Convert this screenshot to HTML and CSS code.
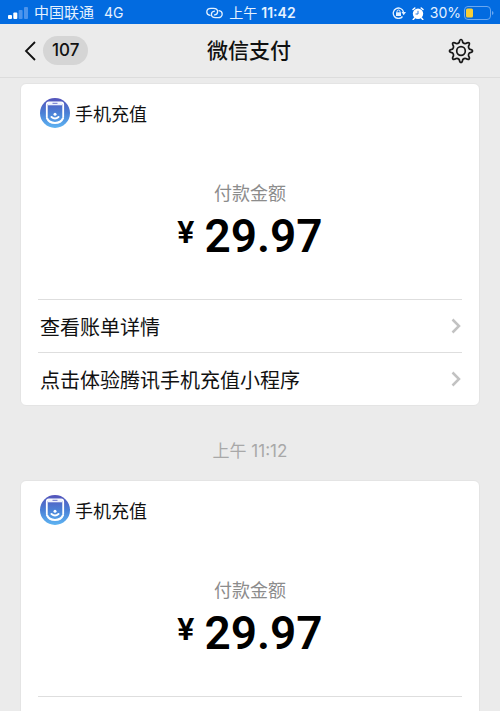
FILE: index.html
```html
<!DOCTYPE html>
<html lang="zh-CN">
<head>
<meta charset="utf-8">
<meta name="viewport" content="width=device-width, initial-scale=1">
<title>微信支付</title>
<link rel="stylesheet" href="styles.css">
</head>
<body>
<svg class="defs" aria-hidden="true">
  <defs>
    <linearGradient id="sky" x1="0" y1="0" x2="0" y2="1">
      <stop offset="0" stop-color="#5453ba"/>
      <stop offset="0.5" stop-color="#4a80d6"/>
      <stop offset="1" stop-color="#5eb4f2"/>
    </linearGradient>
    <symbol id="recharge" viewBox="0 0 30 30">
      <circle cx="15" cy="15" r="15" fill="url(#sky)"/>
      <path d="M6.800 19V6.500Q6.800 4.500 8.800 4.500H21.200Q23.200 4.500 23.200 6.500V19" fill="none" stroke="#fff" stroke-width="1.800"/>
      <path d="M8 4.500H22V7.300H8Z" fill="#eef2fd"/>
      <path d="M12.500 5.300H17.500" stroke="#6a72cc" stroke-width="1"/>
      <circle cx="15" cy="16.200" r="1.500" fill="#fff"/>
      <path d="M11.500 19Q15 22 18.500 19M6.900 20Q9 25 15 25T23.100 20" fill="none" stroke="#fff" stroke-width="2" stroke-linecap="round"/>
    </symbol>
    <symbol id="chevron" viewBox="0 0 10 16">
      <path d="M1.500 1.500L8 8L1.500 14.500" fill="none" stroke="#c2c2c2" stroke-width="2.500"/>
    </symbol>
  </defs>
</svg>
<div class="screen">
  <div class="status">
    <div class="status-side">
      <svg width="20" height="12" viewBox="0 0 20 12" aria-hidden="true">
        <rect x="0" y="8" width="4" height="4" rx="1" fill="#fff"/>
        <rect x="5.300" y="5.500" width="4" height="6.500" rx="1" fill="#fff"/>
        <rect x="10.600" y="3" width="4" height="9" rx="1" fill="#4c94ec"/>
        <rect x="16" y="0" width="4" height="12" rx="1" fill="#4c94ec"/>
      </svg>
      <span class="carrier">中国联通</span>
      <span class="network">4G</span>
    </div>
    <div class="status-time">
      <svg width="17" height="12" viewBox="0 0 17 12" fill="none" stroke="#e4f1ff" stroke-width="1.300" stroke-linecap="round" aria-hidden="true">
        <path d="M4 8.300C2 8 0.800 6.600 0.800 5C0.800 2.800 2.600 1.300 5 1.300H7.500C10 1.300 11.600 2.800 11.600 4.700C11.600 6.400 10.400 7.700 8.500 7.900"/>
        <path d="M13 3.700C15 4 16.200 5.400 16.200 7C16.200 9.200 14.400 10.700 12 10.700H9.500C7 10.700 5.400 9.200 5.400 7.300C5.400 5.600 6.600 4.300 8.500 4.100"/>
      </svg>
      <span>上午 <b>11:42</b></span>
    </div>
    <div class="status-side status-end">
      <svg width="14" height="12" viewBox="0 0 14 12" fill="none" stroke="#e4f1ff" stroke-width="1.300" aria-hidden="true">
        <path d="M10.500 9.500A5.200 5.200 0 1 1 11.500 5"/>
        <path d="M9.500 5H14L11.700 8.200Z" fill="#e4f1ff" stroke="none"/>
        <rect x="4" y="5.300" width="5" height="3.700" fill="#e4f1ff" stroke="none"/>
        <path d="M5 5.500V4.500A1.500 1.500 0 0 1 8 4.500V5.500" stroke-width="1"/>
      </svg>
      <svg class="alarm" width="12" height="13" viewBox="0 0 12 13" aria-hidden="true">
        <circle cx="6" cy="6.800" r="5.200" fill="#fff"/>
        <path d="M1 2.500L2.800 1M11 2.500L9.200 1M2.500 11L1.200 12.500M9.500 11L10.800 12.500" stroke="#fff" stroke-width="1.500" stroke-linecap="round"/>
        <path d="M6 3.800V7H3.500" fill="none" stroke="#2c7cdf" stroke-width="1"/>
      </svg>
      <span class="percent">30%</span>
      <svg class="battery" width="30" height="14" viewBox="0 0 30 14" aria-hidden="true">
        <rect x="0.500" y="0.500" width="26" height="13" rx="3.500" fill="none" stroke="#6ba8f0"/>
        <rect x="2" y="2.500" width="7" height="9" rx="1.500" fill="#f7ce36"/>
        <path d="M28 5V9Q29.500 8.500 29.500 7T28 5Z" fill="#6ba8f0"/>
      </svg>
    </div>
  </div>

  <header class="nav">
    <button class="back" type="button" aria-label="返回">
      <svg width="12" height="20" viewBox="0 0 12 20" aria-hidden="true">
        <path d="M11 1L2 10L11 19" fill="none" stroke="#111" stroke-width="1.800"/>
      </svg>
      <span class="unread">107</span>
    </button>
    <h1>微信支付</h1>
    <button class="settings" type="button" aria-label="设置">
      <svg width="26" height="26" viewBox="0 0 26 26" fill="none" stroke="#181818" stroke-width="1.700" stroke-linejoin="round" aria-hidden="true">
        <path d="M11.200 4.500Q11.700 1.500 13 1.500T14.800 4.500Q16.300 5.800 17.800 5.500Q20.200 4 21.100 4.900T20.500 8.200Q20.200 9.700 21.500 11.200Q24.500 11.700 24.500 13T21.500 14.800Q20.200 16.300 20.500 17.800Q22 20.200 21.100 21.100T17.800 20.500Q16.300 20.200 14.800 21.500Q14.300 24.500 13 24.500T11.200 21.500Q9.700 20.200 8.200 20.500Q5.800 22 4.900 21.100T5.500 17.800Q5.800 16.300 4.500 14.800Q1.500 14.300 1.500 13T4.500 11.200Q5.800 9.700 5.500 8.200Q4 5.800 4.900 4.900T8.200 5.500Q9.700 5.800 11.200 4.500Z"/>
        <circle cx="13" cy="13" r="4.300"/>
      </svg>
    </button>
  </header>

  <main class="chat">
    <article class="card">
      <div class="sender">
        <svg width="30" height="30" aria-hidden="true"><use href="#recharge"/></svg>
        <h2>手机充值</h2>
      </div>
      <div class="payment">
        <p class="label">付款金额</p>
        <p class="amount"><span class="yen">¥</span><span>29.97</span></p>
      </div>
      <a class="row" href="#bill">查看账单详情<svg width="10" height="16" aria-hidden="true"><use href="#chevron"/></svg></a>
      <a class="row" href="#app">点击体验腾讯手机充值小程序<svg width="10" height="16" aria-hidden="true"><use href="#chevron"/></svg></a>
    </article>

    <time class="stamp" datetime="11:12">上午 11:12</time>

    <article class="card">
      <div class="sender">
        <svg width="30" height="30" aria-hidden="true"><use href="#recharge"/></svg>
        <h2>手机充值</h2>
      </div>
      <div class="payment">
        <p class="label">付款金额</p>
        <p class="amount"><span class="yen">¥</span><span>29.97</span></p>
      </div>
      <div class="row"></div>
    </article>
  </main>
</div>
</body>
</html>
```
FILE: styles.css
```css
* {
  box-sizing: border-box;
}

body {
  margin: 0;
  background: #ebebeb;
  color: #111;
  font-family: Inter, "Noto Sans CJK SC", sans-serif;
}

h1, h2, p {
  margin: 0;
  font-weight: 400;
}

button {
  padding: 0;
  border: 0;
  background: none;
  color: inherit;
  font: inherit;
}

svg {
  display: block;
  flex: none;
}

.defs {
  position: absolute;
  width: 0;
  height: 0;
}

.screen {
  display: flex;
  flex-direction: column;
  height: 100vh;
  overflow: hidden;
}

.status {
  display: grid;
  grid-template-columns: 1fr auto 1fr;
  align-items: center;
  flex: none;
  height: 24px;
  padding: 2px 6px 0 8px;
  background: #026be0;
  color: #e4f1ff;
  font-size: 14px;
  line-height: 22px;
}

.status-side,
.status-time {
  display: flex;
  align-items: center;
}

.status-time {
  gap: 6px;
}

.status-time b {
  font-weight: 600;
}

.status-end {
  justify-content: flex-end;
}

.carrier {
  margin-left: 6px;
  font-size: 15px;
}

.network {
  margin-left: 10px;
}

.alarm {
  margin: 0 6px;
}

.battery {
  margin-left: 3px;
}

.nav {
  display: grid;
  grid-template-columns: 1fr auto 1fr;
  align-items: center;
  flex: none;
  height: 54px;
  padding: 0 26px 0 24px;
  border-bottom: 1px solid #dcdcdc;
}

.nav h1 {
  font-size: 21px;
  font-weight: 500;
  line-height: 30px;
}

.back {
  display: flex;
  align-items: center;
  gap: 7px;
}

.unread {
  padding: 0 9px;
  border-radius: 15px;
  background: #d5d5d5;
  font-size: 17px;
  font-weight: 500;
  line-height: 29px;
}

.settings {
  justify-self: end;
}

.chat {
  flex: 1;
  min-height: 0;
  padding: 5px 20px 0;
}

.card {
  padding: 0 17px;
  border: 1px solid #e4e4e4;
  border-radius: 6px;
  background: #fff;
}

.sender {
  display: flex;
  align-items: center;
  gap: 5px;
  padding: 14px 2px 0;
}

.sender h2 {
  padding-top: 2px;
  font-size: 18px;
  line-height: 30px;
}

.sender svg {
  align-self: flex-start;
}

.payment {
  height: 169px;
  padding-top: 50px;
  text-align: center;
}

.label {
  color: #8c8c8c;
  font-size: 18px;
  line-height: 28px;
}

.amount {
  display: flex;
  justify-content: center;
  gap: 10px;
  color: #000;
  font-family: Roboto, sans-serif;
  font-size: 46px;
  font-weight: 600;
  line-height: 56px;
}

.yen {
  font-size: 32px;
  line-height: 48px;
}

.row {
  display: flex;
  align-items: center;
  justify-content: space-between;
  height: 53px;
  padding: 0 1px 0 2px;
  border-top: 1px solid #dedede;
  color: #111;
  font-size: 20px;
  text-decoration: none;
}

.stamp {
  display: block;
  padding: 31px 0 15px;
  color: #a8a8a8;
  font-size: 17px;
  line-height: 28px;
  text-align: center;
}
```
